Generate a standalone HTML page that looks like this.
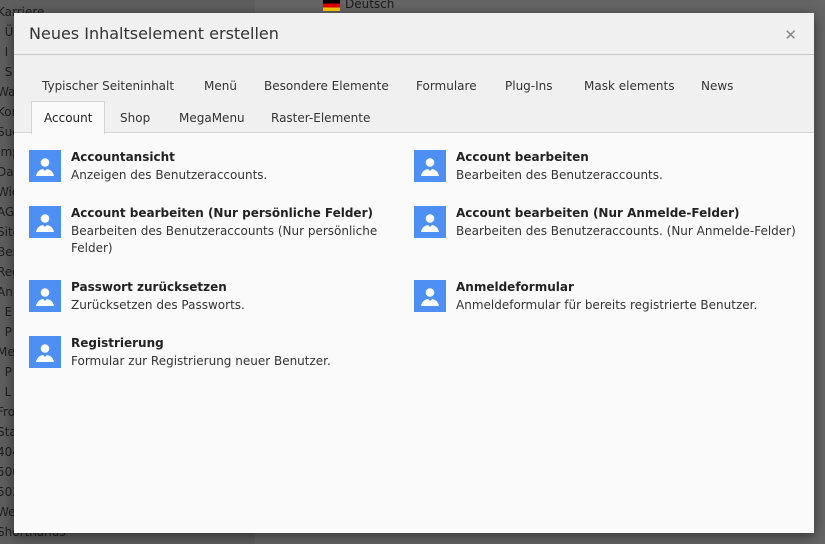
<!DOCTYPE html>
<html style="overflow:hidden;height:544px"><head><meta charset="utf-8"><style>
*{margin:0;padding:0;box-sizing:border-box}
body{width:825px;height:544px;overflow:hidden;background:#5e5e5e;font-family:"DejaVu Sans","Liberation Sans",sans-serif;position:relative}
.bg{position:absolute;font-size:12px;color:#1e1e1e;left:-3px;line-height:20px;top:2px}
.bgr{position:absolute;left:255px;top:0;width:570px;height:544px;background:#656565}
.modal{position:absolute;left:14px;top:13px;width:800px;height:520px;background:#fafafa;box-shadow:0 3px 12px rgba(0,0,0,.5)}
.hd{height:42px;background:#f0f0f0;border-bottom:1px solid #c8c8c8;font-size:16px;color:#333;padding:11px 15px}
.x{position:absolute;right:17px;top:13px;font-size:15px;color:#888;font-weight:bold}
.tabs{background:#f0f0f0;height:78px;border-bottom:1px solid #d4d4d4;position:relative;font-size:12px;color:#333}
.tabs span{position:absolute}
.act{background:#fafafa;border:1px solid #d4d4d4;border-bottom:none;height:33px;padding:9px 12px 0;top:46px;left:17px;color:#222}
.it{position:absolute;font-size:12px;color:#333;line-height:17.5px}
.it b{color:#222;display:block}
.ic{position:absolute;left:-42px;top:1px;width:32px;height:32px;background:#4d8ff2}
</style></head><body>
<div class="bgr"></div>
<div class="bg">Karriere<br>&nbsp;&nbsp;Ü<br>&nbsp;&nbsp;I<br>&nbsp;&nbsp;S<br>Wa<br>Kor<br>Suc<br>Imp<br>Dat<br>Wic<br>AGI<br>Site<br>Ber<br>Reg<br>Anm<br>&nbsp;&nbsp;E<br>&nbsp;&nbsp;P<br>Mei<br>&nbsp;&nbsp;P<br>&nbsp;&nbsp;L<br>Fro<br>Sta<br>404<br>500<br>503<br>We<br>Shorthands</div>
<div style="position:absolute;left:323px;top:0;width:17px;height:11px;background:linear-gradient(#000 33%,#d00 33% 66%,#fc0 66%)"></div>
<div style="position:absolute;left:345px;top:-3px;font-size:12px;color:#1a1a1a">Deutsch</div>
<div class="modal">
<div class="hd">Neues Inhaltselement erstellen</div><div class="x">✕</div>
<div class="tabs">
<span style="left:28px;top:24px">Typischer Seiteninhalt</span>
<span style="left:190px;top:24px">Menü</span>
<span style="left:250px;top:24px">Besondere Elemente</span>
<span style="left:402px;top:24px">Formulare</span>
<span style="left:491px;top:24px">Plug-Ins</span>
<span style="left:570px;top:24px">Mask elements</span>
<span style="left:687px;top:24px">News</span>
<span class="act">Account</span>
<span style="left:106px;top:56px">Shop</span>
<span style="left:165px;top:56px">MegaMenu</span>
<span style="left:257px;top:56px">Raster-Elemente</span>
</div>
</div>
<svg width="0" height="0" style="position:absolute"><defs><g id="u"><circle cx="16" cy="12.5" r="4.3" fill="#fff"/><path d="M7 26 C8 21 11 19.5 14 19 L16 21 L18 19 C21 19.5 24 21 25 26 Z" fill="#fff"/></g></defs></svg>
<div class="it" style="left:71px;top:149px"><div class="ic"><svg width="32" height="32"><use href="#u"/></svg></div><b>Accountansicht</b>Anzeigen des Benutzeraccounts.</div>
<div class="it" style="left:456px;top:149px"><div class="ic"><svg width="32" height="32"><use href="#u"/></svg></div><b>Account bearbeiten</b>Bearbeiten des Benutzeraccounts.</div>
<div class="it" style="left:71px;top:205px;width:320px"><div class="ic"><svg width="32" height="32"><use href="#u"/></svg></div><b>Account bearbeiten (Nur persönliche Felder)</b>Bearbeiten des Benutzeraccounts (Nur persönliche Felder)</div>
<div class="it" style="left:456px;top:205px;width:350px"><div class="ic"><svg width="32" height="32"><use href="#u"/></svg></div><b>Account bearbeiten (Nur Anmelde-Felder)</b>Bearbeiten des Benutzeraccounts. (Nur Anmelde-Felder)</div>
<div class="it" style="left:71px;top:279px"><div class="ic"><svg width="32" height="32"><use href="#u"/></svg></div><b>Passwort zurücksetzen</b>Zurücksetzen des Passworts.</div>
<div class="it" style="left:456px;top:279px"><div class="ic"><svg width="32" height="32"><use href="#u"/></svg></div><b>Anmeldeformular</b>Anmeldeformular für bereits registrierte Benutzer.</div>
<div class="it" style="left:71px;top:335px"><div class="ic"><svg width="32" height="32"><use href="#u"/></svg></div><b>Registrierung</b>Formular zur Registrierung neuer Benutzer.</div>
</body></html>
